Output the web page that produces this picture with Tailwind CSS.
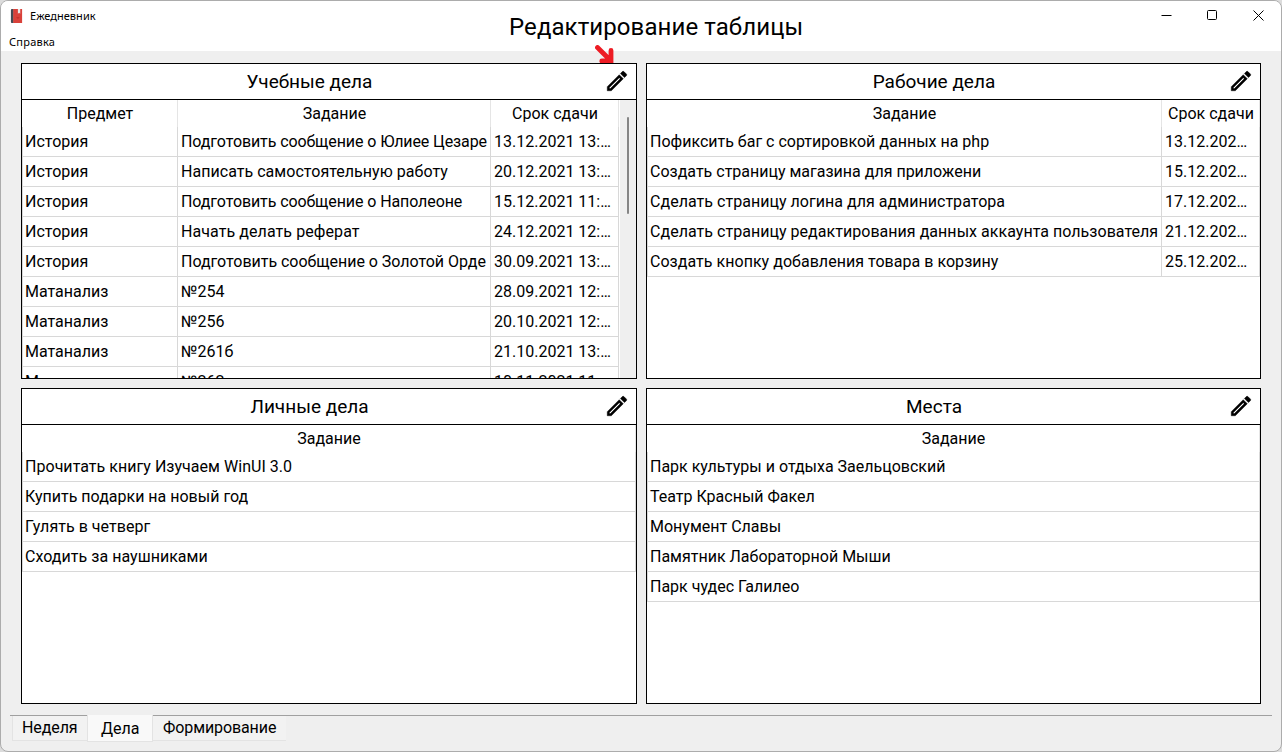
<!DOCTYPE html>
<html lang="ru">
<head>
<meta charset="utf-8">
<title>Ежедневник</title>
<script src="https://cdn.jsdelivr.net/npm/@tailwindcss/browser@4"></script>
</head>
<body class="bg-[#dcdcdc] font-['Roboto',sans-serif] text-black">
<svg class="hidden">
  <symbol id="pencil" viewBox="0 0 24 24"><path d="M14.060 9.020l.92.92L5.920 19H5v-.92l9.060-9.060M17.660 3c-.25 0-.51.1-.7.29l-1.830 1.830 3.750 3.750 1.830-1.830c.39-.39.39-1.020 0-1.410l-2.340-2.340c-.2-.2-.45-.29-.71-.29zm-3.600 3.190L3 17.250V21h3.750L17.810 9.940l-3.750-3.750z" stroke="#000" stroke-width=".4"/></symbol>
</svg>
<div class="relative flex h-[752px] w-[1282px] flex-col overflow-hidden rounded-lg border border-[#acacac] bg-[#efefef]">
  <header class="flex h-[50px] shrink-0 bg-white">
    <div class="w-[508px] font-['Noto_Sans','Open_Sans',sans-serif] text-[11px] leading-4">
      <div class="flex h-8 items-center pl-[9px] pb-[3px]">
        <svg class="h-[14px] w-[13px]" viewBox="0 0 13 15"><path d="M1.500 0h2v15H1.500a1 1 0 0 1-1-1V1a1 1 0 0 1 1-1Z" fill="#444b54"/><path d="M3 0H12.500v15H3Z" fill="#d9413a"/><path d="M8 0h2.500v5L9.250 4 8 5Z" fill="#e9e9e9"/><path d="M6 8.500h4L8 11Z" fill="#c7332e"/></svg>
        <span class="ml-[7px] tracking-[0.03px]">Ежедневник</span>
      </div>
      <div class="pt-px pl-2 tracking-[0.25px]">Справка</div>
    </div>
    <h1 class="flex-1 pt-[8px] text-[24px] leading-9 tracking-[0.09px] whitespace-nowrap">Редактирование таблицы</h1>
    <div class="flex pt-[9px] pr-[17px] gap-[35px]">
      <svg class="size-[11px]" viewBox="0 0 11 11"><path d="M.5 5.500h10" stroke="#000"/></svg>
      <svg class="size-[11px]" viewBox="0 0 11 11"><rect x=".5" y=".5" width="9" height="9" rx="1" fill="none" stroke="#000"/></svg>
      <svg class="size-[11px]" viewBox="0 0 11 11"><path d="M.5.5l10 10M10.500.5l-10 10" stroke="#000"/></svg>
    </div>
  </header>
  <svg class="absolute left-[594px] top-[44px] h-[18px] w-[20px]" viewBox="0 0 20 18"><path d="M2.500 2.500 14 14M16 5.500V16H6.800" fill="none" stroke="#ed1c24" stroke-width="4.800" stroke-linecap="round" stroke-linejoin="miter"/></svg>

  <main id="main" class="mt-3 ml-5 grid grid-cols-[616px_615px] grid-rows-[316px_316px] gap-[9px]"></main>

  <nav class="mt-[11px] ml-[9px] mr-5 flex h-[27px] w-[1262px] items-start border-t border-[#a0a0a0] text-base leading-6">
    <div class="ml-[2px] h-[25px] w-[75px] border-b border-l border-[#e3e3e3] bg-[#f2f2f2] pl-[9px] tracking-[-0.1px]">Неделя</div>
    <div class="-mt-px h-[27px] w-[66px] border border-t-0 border-[#e3e3e3] bg-[#f9f9f9] pt-[2px] pl-[13px]">Дела</div>
    <div class="h-[25px] w-[133px] border-b border-[#e3e3e3] bg-[#f2f2f2] pl-[10px] tracking-[-0.1px]">Формирование</div>
  </nav>
</div>
<script>
const tables = [
  {title: 'Учебные дела', cols: 'grid-cols-[156px_313px_128px]', w: 'w-[597px]', scroll: true, head: ['Предмет', 'Задание', 'Срок сдачи'], rows: [
    ['История', 'Подготовить сообщение о Юлиее Цезаре', '13.12.2021 13:…'],
    ['История', 'Написать самостоятельную работу', '20.12.2021 13:…'],
    ['История', 'Подготовить сообщение о Наполеоне', '15.12.2021 11:…'],
    ['История', 'Начать делать реферат', '24.12.2021 12:…'],
    ['История', 'Подготовить сообщение о Золотой Орде', '30.09.2021 13:…'],
    ['Матанализ', '№254', '28.09.2021 12:…'],
    ['Матанализ', '№256', '20.10.2021 12:…'],
    ['Матанализ', '№261б', '21.10.2021 13:…'],
    ['Матанализ', '№262', '10.11.2021 11:…']]},
  {title: 'Рабочие дела', cols: 'grid-cols-[515px_98px]', w: 'w-[613px]', head: ['Задание', 'Срок сдачи'], rows: [
    ['Пофиксить баг с сортировкой данных на php', '13.12.202…'],
    ['Создать страницу магазина для приложени', '15.12.202…'],
    ['Сделать страницу логина для администратора', '17.12.202…'],
    ['Сделать страницу редактирования данных аккаунта пользователя', '21.12.202…'],
    ['Создать кнопку добавления товара в корзину', '25.12.202…']]},
  {title: 'Личные дела', cols: 'grid-cols-[614px]', w: 'w-[614px]', head: ['Задание'], rows: [
    ['Прочитать книгу Изучаем WinUI 3.0'], ['Купить подарки на новый год'], ['Гулять в четверг'], ['Сходить за наушниками']]},
  {title: 'Места', cols: 'grid-cols-[613px]', w: 'w-[613px]', head: ['Задание'], rows: [
    ['Парк культуры и отдыха Заельцовский'], ['Театр Красный Факел'], ['Монумент Славы'], ['Памятник Лабораторной Мыши'], ['Парк чудес Галилео']]}
];
// Letter spacing of the longer task names
const tracking = text =>
  /Юлиее|Наполеоне/.test(text) ? 'tracking-[-0.1px]' :
  /Орде/.test(text) ? 'tracking-[-0.03px]' :
  /реферат/.test(text) ? 'tracking-[0.08px]' :
  /самостоятельную|редактирования|логина|корзину|WinUI|четверг|наушниками/.test(text) ? 'tracking-[0.035px]' : 'tracking-normal';
document.getElementById('main').innerHTML = tables.map(t => `
  <section class="flex flex-col overflow-hidden border border-black bg-white">
    <div class="flex h-9 shrink-0 items-center border-b border-black">
      <h2 class="flex-1 pl-[3px] text-center text-[19px] leading-6">${t.title}</h2>
      <svg class="mr-[6px] mb-px ml-[10px] size-[26px] shrink-0"><use href="#pencil"/></svg>
    </div>
    <div class="flex min-h-0 flex-1 justify-between overflow-hidden">
      <div class="${t.w} shrink-0 text-base">
        <div class="grid h-[27px] ${t.cols} text-center leading-[27px]">
          ${t.head.map(h => `<div class="border-r border-[#e5e5e5] pl-px whitespace-nowrap">${h}</div>`).join('')}
        </div>
        <div class="border-l border-[#d8d8d8]">
        ${t.rows.map(r => `<div class="-ml-px grid h-[30px] ${t.cols} leading-[29px]">${r.map(c => `<div class="border-r border-b border-[#d8d8d8] pl-[3px] whitespace-nowrap ${tracking(c)}">${c}</div>`).join('')}</div>`).join('')}
        </div>
      </div>
      ${t.scroll ? '<div class="flex w-4 shrink-0 bg-[#efefef] pt-[17px] pl-[7px]"><div class="h-[97px] w-[2px] rounded-full bg-[#858585]"></div></div>' : ''}
    </div>
  </section>`).join('');
</script>
</body>
</html>
